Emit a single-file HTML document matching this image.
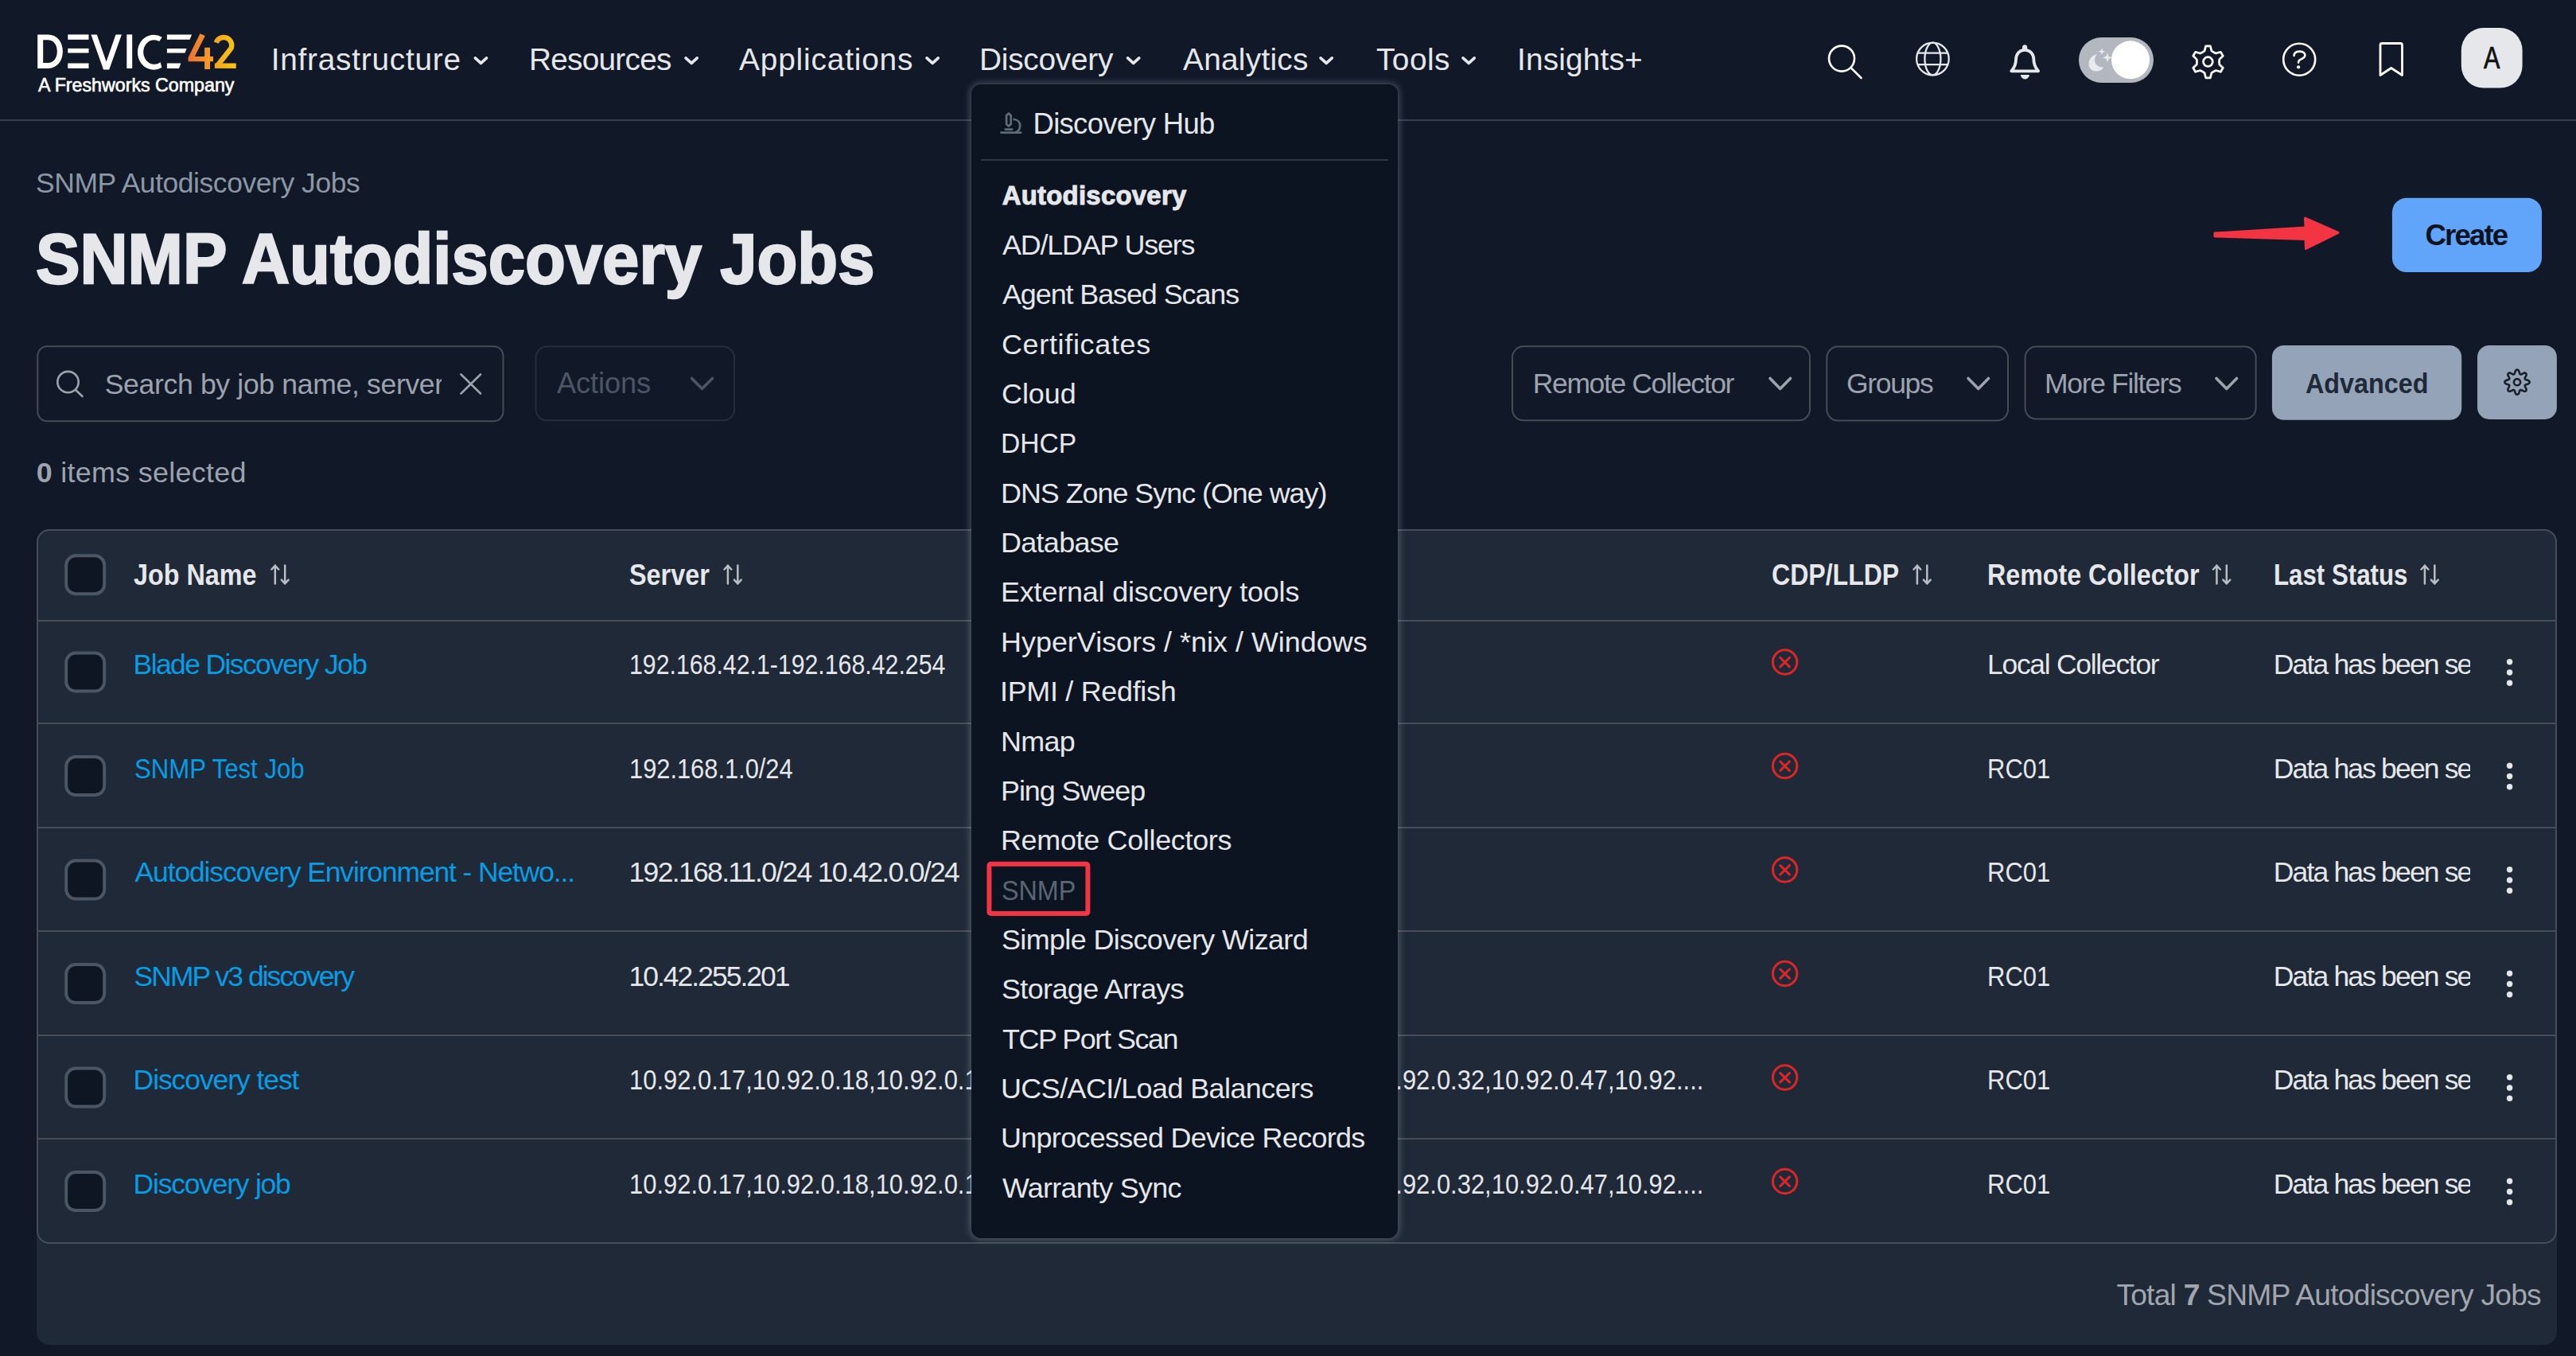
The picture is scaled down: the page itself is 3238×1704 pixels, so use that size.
<!DOCTYPE html>
<html><head><meta charset="utf-8">
<style>
*{margin:0;padding:0;box-sizing:border-box}
html,body{width:3238px;height:1704px;overflow:hidden;background:#111827;font-family:"Liberation Sans",sans-serif}
.t{position:absolute;white-space:nowrap;line-height:1}
.clip{position:absolute;overflow:hidden}
.a{position:absolute}
svg{position:absolute;overflow:visible}
</style></head><body>
<!-- NAV -->
<div class="a" style="left:0;top:150px;width:3238px;height:2px;background:#383e4b"></div>
<svg style="left:0;top:0" width="3238" height="150" viewBox="0 0 3238 150">
  <defs>
    <linearGradient id="lg" x1="236" y1="0" x2="297" y2="0" gradientUnits="userSpaceOnUse">
      <stop offset="0" stop-color="#ee6f2f"/><stop offset="0.5" stop-color="#f5a023"/><stop offset="1" stop-color="#f6c70f"/>
    </linearGradient>
  </defs>
  <!-- logo -->
  <path fill="#ffffff" fill-rule="evenodd" d="M47.2 43.4H60.5C71.5 43.4 78.9 52.2 78.9 64.6C78.9 77.1 71.5 85.9 60.5 85.9H47.2Z M54.2 50.2V79.1H60.2C67.2 79.1 71.8 73.4 71.8 64.6C71.8 55.9 67.2 50.2 60.2 50.2Z"/>
  <rect fill="#fff" x="85.3" y="43.4" width="26.2" height="6.4"/>
  <rect fill="#fff" x="85.3" y="60.9" width="26.2" height="5.6"/>
  <rect fill="#fff" x="85.3" y="79.5" width="26.2" height="6.4"/>
  <path fill="#fff" d="M114.4 43.4H121.8L133.6 77.5L145.5 43.4H152.9L137.2 87.6H130.1Z"/>
  <rect fill="#fff" x="159.3" y="43.4" width="6.9" height="42.5"/>
  <path fill="#fff" d="M203.7 46.8A20.3 22 0 1 0 203.4 84.7L201.6 78.3A13.8 15.3 0 1 1 200.3 51.9Z"/>
  <path fill="#fff" d="M209.9 43.4H241L238.6 49.8H209.9Z M209.9 60.9H234.6L232.5 66.5H209.9Z M209.9 79.5H227.4L225 85.9H209.9Z"/>
  <path fill="url(#lg)" d="M251.4 42.3L257.8 44.9L244.8 71H257.1V59.8H264V71H268V77.2H264V86.9H257.1V77.2H236.6V72.2Z"/>
  <path fill="none" stroke="url(#lg)" stroke-width="6.4" stroke-linejoin="round" d="M271.7 53.6A10 10 0 1 1 290.6 60.4L273.2 82.5"/>
  <rect fill="url(#lg)" x="269.9" y="79.5" width="26.8" height="6.4"/>
  <!-- nav chevrons -->
  <g fill="none" stroke="#e5e7eb" stroke-width="3.6" stroke-linecap="round" stroke-linejoin="round">
    <path d="M597.3 72.9L604.5 79.4L611.6 72.9"/>
    <path d="M862 72.9L869.2 79.4L876.3 72.9"/>
    <path d="M1165 72.9L1172.2 79.4L1179.3 72.9"/>
    <path d="M1417.5 72.9L1424.7 79.4L1431.8 72.9"/>
    <path d="M1660 72.9L1667.2 79.4L1674.3 72.9"/>
    <path d="M1839 72.9L1846.2 79.4L1853.3 72.9"/>
  </g>
  <!-- search -->
  <g fill="none" stroke="#ffffff" stroke-width="2.6" stroke-linecap="round">
    <circle cx="2315" cy="73.6" r="16"/>
    <path d="M2327 85.6L2339.5 98"/>
  </g>
  <!-- globe -->
  <g fill="none" stroke="#e5e7eb" stroke-width="2.3">
    <circle cx="2429.4" cy="74" r="20.3"/>
    <ellipse cx="2429.4" cy="74" rx="10" ry="20.3"/>
    <path d="M2410.5 66.7H2448.3M2410.5 81.2H2448.3"/>
  </g>
  <!-- bell -->
  <g fill="none" stroke="#e5e7eb" stroke-width="3.8" stroke-linejoin="round" stroke-linecap="round">
    <path d="M2545.2 62.8C2538.5 62.8 2534 68 2534 75C2534 81.5 2532 85 2528.3 89.3H2562.1C2558.4 85 2556.4 81.5 2556.4 75C2556.4 68 2551.9 62.8 2545.2 62.8Z"/>
  </g>
  <path fill="#e5e7eb" d="M2542 62V59.2C2542 57.4 2543.4 56.2 2545.2 56.2C2547 56.2 2548.2 57.4 2548.2 59.2V62Z"/>
  <path fill="#e5e7eb" d="M2539.8 94H2551C2550.5 97.3 2548 99.5 2545.4 99.5C2542.8 99.5 2540.3 97.3 2539.8 94Z"/>
  <!-- toggle -->
  <rect x="2613" y="47" width="94" height="57" rx="28.5" fill="#b3b8c0"/>
  <circle cx="2678" cy="75.3" r="24" fill="#ffffff"/>
  <path fill="#e8eaee" d="M2636 68C2629.5 69.5 2625.5 74.5 2625.5 80.5C2625.5 86.5 2630.5 89.5 2635 89.5C2639 89.5 2642.5 87.5 2644 84.5C2637 85 2632.5 80 2633 74.5C2633.2 72 2634.5 69.5 2636 68Z"/>
  <path fill="#e8eaee" d="M2642 60.5L2643.2 63.6L2646.3 64.8L2643.2 66L2642 69.1L2640.8 66L2637.7 64.8L2640.8 63.6Z"/>
  <path fill="#e8eaee" d="M2649 66.5L2650.6 70.8L2654.9 72.4L2650.6 74L2649 78.3L2647.4 74L2643.1 72.4L2647.4 70.8Z"/>
  <!-- gear -->
  <g fill="none" stroke="#ffffff" stroke-width="2.7" stroke-linejoin="round">
    <path d="M2771.11 63.88 L2772.62 57.81 L2778.38 57.81 L2779.89 63.88 L2782.50 65.68 L2785.36 67.04 L2791.37 65.31 L2794.26 70.30 L2789.75 74.64 L2789.50 77.80 L2789.75 80.96 L2794.26 85.30 L2791.37 90.29 L2785.36 88.56 L2782.50 89.92 L2779.89 91.72 L2778.38 97.79 L2772.62 97.79 L2771.11 91.72 L2768.50 89.92 L2765.64 88.56 L2759.63 90.29 L2756.74 85.30 L2761.25 80.96 L2761.50 77.80 L2761.25 74.64 L2756.74 70.30 L2759.63 65.31 L2765.64 67.04 L2768.50 65.68Z"/>
    <circle cx="2775.4" cy="77.6" r="5.9"/>
  </g>
  <!-- help -->
  <g fill="none" stroke="#ffffff" stroke-width="2.6" stroke-linecap="round">
    <circle cx="2890.2" cy="74.8" r="20"/>
    <path d="M2883.6 70C2883.6 66.6 2886.2 64.6 2890.6 64.6C2895 64.6 2897.4 66.8 2897.4 69.6C2897.4 72.4 2894.6 73.6 2891.6 74.9C2889.9 75.6 2889.1 76.6 2889.1 78.6"/>
  </g>
  <circle cx="2889.1" cy="84.3" r="2.1" fill="#ffffff"/>
  <!-- bookmark -->
  <path fill="none" stroke="#ffffff" stroke-width="2.8" stroke-linejoin="round" d="M2992 56.5C2992 55 2993 54.5 2994.5 54.5H3017C3018.5 54.5 3019.5 55 3019.5 56.5V94.5L3005.7 85.5L2992 94.5Z"/>
  <!-- avatar -->
  <rect x="3093.8" y="35.1" width="76.8" height="75.5" rx="28" fill="#e5e7eb"/>
</svg>

<!-- PAGE HEADER SHAPES -->
<svg style="left:0;top:0" width="3238" height="600" viewBox="0 0 3238 600">
  <path fill="#f33443" stroke="#f33443" stroke-width="3" stroke-linejoin="round" d="M2784 293L2898 286L2897.5 274L2939 292.3L2898.5 312.5L2898 300.5L2784 297Z"/>
  <rect x="3006.9" y="248.8" width="188.1" height="93.2" rx="18" fill="#60a5fa"/>
  <!-- search box -->
  <rect x="47.3" y="435.3" width="585.2" height="94" rx="12" fill="none" stroke="#454c58" stroke-width="2"/>
  <g fill="none" stroke="#9ca3af" stroke-width="2.6" stroke-linecap="round">
    <circle cx="85.5" cy="480.1" r="13.2"/>
    <path d="M95 490L103.5 498"/>
    <path d="M579.5 470.5L604 494.5M604 470.5L579.5 494.5"/>
  </g>
  <rect x="673.5" y="435.6" width="249.6" height="92.7" rx="14" fill="none" stroke="#272d3a" stroke-width="2"/>
  <path fill="none" stroke="#4b5563" stroke-width="3.6" stroke-linecap="round" stroke-linejoin="round" d="M869.5 475.5L882.5 488.5L895.5 475.5"/>
  <!-- filters -->
  <g fill="none" stroke="#454c58" stroke-width="2">
    <rect x="1901" y="435.3" width="374" height="93" rx="14"/>
    <rect x="2296.3" y="435.6" width="227.7" height="93" rx="14"/>
    <rect x="2545.6" y="435.6" width="290" height="91" rx="14"/>
  </g>
  <g fill="none" stroke="#9ca3af" stroke-width="3.6" stroke-linecap="round" stroke-linejoin="round">
    <path d="M2225 475.5L2237.7 488.5L2250.5 475.5"/>
    <path d="M2474 475.5L2486.8 488.5L2499.5 475.5"/>
    <path d="M2786 475.5L2798.8 488.5L2811.5 475.5"/>
  </g>
  <rect x="2855.9" y="433.9" width="238.3" height="93.9" rx="15" fill="#94a3b8"/>
  <rect x="3114" y="433.9" width="99.9" height="93" rx="15" fill="#94a3b8"/>
  <g fill="none" stroke="#1a1f29" stroke-width="2.6" stroke-linejoin="round">
    <path d="M3164.00 464.60 L3164.61 464.71 L3165.19 465.04 L3165.73 465.57 L3166.20 466.30 L3166.56 467.35 L3166.83 468.41 L3167.11 469.16 L3167.40 469.75 L3167.70 470.16 L3168.06 470.41 L3168.48 470.48 L3168.99 470.41 L3169.60 470.20 L3170.33 469.86 L3171.28 469.31 L3172.27 468.81 L3173.12 468.63 L3173.88 468.63 L3174.52 468.82 L3175.03 469.17 L3175.38 469.68 L3175.57 470.32 L3175.57 471.08 L3175.39 471.93 L3174.89 472.92 L3174.34 473.87 L3174.00 474.60 L3173.79 475.21 L3173.72 475.72 L3173.79 476.14 L3174.04 476.50 L3174.45 476.80 L3175.04 477.09 L3175.79 477.37 L3176.85 477.64 L3177.90 478.00 L3178.63 478.47 L3179.16 479.01 L3179.49 479.59 L3179.60 480.20 L3179.49 480.81 L3179.16 481.39 L3178.63 481.93 L3177.90 482.40 L3176.85 482.76 L3175.79 483.03 L3175.04 483.31 L3174.45 483.60 L3174.04 483.90 L3173.79 484.26 L3173.72 484.68 L3173.79 485.19 L3174.00 485.80 L3174.34 486.53 L3174.89 487.48 L3175.39 488.47 L3175.57 489.32 L3175.57 490.08 L3175.38 490.72 L3175.03 491.23 L3174.52 491.58 L3173.88 491.77 L3173.12 491.77 L3172.27 491.59 L3171.28 491.09 L3170.33 490.54 L3169.60 490.20 L3168.99 489.99 L3168.48 489.92 L3168.06 489.99 L3167.70 490.24 L3167.40 490.65 L3167.11 491.24 L3166.83 491.99 L3166.56 493.05 L3166.20 494.10 L3165.73 494.83 L3165.19 495.36 L3164.61 495.69 L3164.00 495.80 L3163.39 495.69 L3162.81 495.36 L3162.27 494.83 L3161.80 494.10 L3161.44 493.05 L3161.17 491.99 L3160.89 491.24 L3160.60 490.65 L3160.30 490.24 L3159.94 489.99 L3159.52 489.92 L3159.01 489.99 L3158.40 490.20 L3157.67 490.54 L3156.72 491.09 L3155.73 491.59 L3154.88 491.77 L3154.12 491.77 L3153.48 491.58 L3152.97 491.23 L3152.62 490.72 L3152.43 490.08 L3152.43 489.32 L3152.61 488.47 L3153.11 487.48 L3153.66 486.53 L3154.00 485.80 L3154.21 485.19 L3154.28 484.68 L3154.21 484.26 L3153.96 483.90 L3153.55 483.60 L3152.96 483.31 L3152.21 483.03 L3151.15 482.76 L3150.10 482.40 L3149.37 481.93 L3148.84 481.39 L3148.51 480.81 L3148.40 480.20 L3148.51 479.59 L3148.84 479.01 L3149.37 478.47 L3150.10 478.00 L3151.15 477.64 L3152.21 477.37 L3152.96 477.09 L3153.55 476.80 L3153.96 476.50 L3154.21 476.14 L3154.28 475.72 L3154.21 475.21 L3154.00 474.60 L3153.66 473.87 L3153.11 472.92 L3152.61 471.93 L3152.43 471.08 L3152.43 470.32 L3152.62 469.68 L3152.97 469.17 L3153.48 468.82 L3154.12 468.63 L3154.88 468.63 L3155.73 468.81 L3156.72 469.31 L3157.67 469.86 L3158.40 470.20 L3159.01 470.41 L3159.52 470.48 L3159.94 470.41 L3160.30 470.16 L3160.60 469.75 L3160.89 469.16 L3161.17 468.41 L3161.44 467.35 L3161.80 466.30 L3162.27 465.57 L3162.81 465.04 L3163.39 464.71Z"/>
    <circle cx="3164" cy="480.2" r="4.1"/>
  </g>
</svg>

<!-- TABLE PANEL -->
<div class="a" style="left:46px;top:665px;width:3168px;height:1025px;background:#1f2937;border-radius:16px"></div>
<div class="a" style="left:46px;top:665px;width:3168px;height:898px;border:2px solid #464c58;border-radius:16px"></div>
<div class="a" style="left:48px;top:779px;width:3164px;height:2px;background:#464c58"></div>
<div class="a" style="left:48px;top:908px;width:3164px;height:2px;background:#464c58"></div>
<div class="a" style="left:48px;top:1038.5px;width:3164px;height:2px;background:#464c58"></div>
<div class="a" style="left:48px;top:1169px;width:3164px;height:2px;background:#464c58"></div>
<div class="a" style="left:48px;top:1299.5px;width:3164px;height:2px;background:#464c58"></div>
<div class="a" style="left:48px;top:1430px;width:3164px;height:2px;background:#464c58"></div>
<svg style="left:0;top:0" width="3238" height="1704" viewBox="0 0 3238 1704">
  <defs>
    <g id="cb"><rect x="0" y="0" width="48" height="48" rx="12" fill="#0f1623" stroke="#4b5563" stroke-width="4"/></g>
    <g id="sort" fill="none" stroke="#b9bdc5" stroke-width="2.5" stroke-linecap="round" stroke-linejoin="round">
      <path d="M5.4 23.3V0.3M1 5.2L5.4 0.6L9.8 5.2"/>
      <path d="M17.8 0.3V23.3M13.4 18.4L17.8 23L22.2 18.4"/>
    </g>
    <g id="xc" fill="none" stroke="#dc2626" stroke-width="3.1" stroke-linecap="round">
      <circle cx="0" cy="0" r="15.2"/>
      <path d="M-5.8 -5.5L5.8 5.9M5.8 -5.5L-5.8 5.9"/>
    </g>
    <g id="keb" fill="#e5e7eb"><circle cx="0" cy="0" r="3.7"/><circle cx="0" cy="13.3" r="3.7"/><circle cx="0" cy="26.6" r="3.7"/></g>
  </defs>
  <use href="#cb" x="83.2" y="698.3"/>
  <use href="#sort" x="340.4" y="710.3"/>
  <use href="#sort" x="909.5" y="710.3"/>
  <use href="#sort" x="2404.5" y="710.3"/>
  <use href="#sort" x="2781" y="710.3"/>
  <use href="#sort" x="3042.5" y="710.3"/>
  <!--ROWS-->
  <use href="#cb" x="83.2" y="820.6"/>
  <use href="#cb" x="83.2" y="951.1"/>
  <use href="#cb" x="83.2" y="1081.6"/>
  <use href="#cb" x="83.2" y="1212.1"/>
  <use href="#cb" x="83.2" y="1342.6"/>
  <use href="#cb" x="83.2" y="1473.1"/>
  <use href="#xc" x="2243.6" y="832.0"/>
  <use href="#xc" x="2243.6" y="962.5"/>
  <use href="#xc" x="2243.6" y="1093.0"/>
  <use href="#xc" x="2243.6" y="1223.5"/>
  <use href="#xc" x="2243.6" y="1354.0"/>
  <use href="#xc" x="2243.6" y="1484.5"/>
  <use href="#keb" x="3154.6" y="831.7"/>
  <use href="#keb" x="3154.6" y="962.2"/>
  <use href="#keb" x="3154.6" y="1092.7"/>
  <use href="#keb" x="3154.6" y="1223.2"/>
  <use href="#keb" x="3154.6" y="1353.7"/>
  <use href="#keb" x="3154.6" y="1484.2"/>
</svg>

<div class="t" style="left:340.7px;top:55.8px;font-size:38.81px;font-weight:400;color:#e5e7eb;letter-spacing:0.76px;">Infrastructure</div>
<div class="t" style="left:665.0px;top:55.8px;font-size:38.81px;font-weight:400;color:#e5e7eb;letter-spacing:-0.76px;">Resources</div>
<div class="t" style="left:929.0px;top:55.8px;font-size:38.81px;font-weight:400;color:#e5e7eb;letter-spacing:0.84px;">Applications</div>
<div class="t" style="left:1231.0px;top:55.8px;font-size:38.81px;font-weight:400;color:#e5e7eb;letter-spacing:-0.24px;">Discovery</div>
<div class="t" style="left:1487.0px;top:55.8px;font-size:38.81px;font-weight:400;color:#e5e7eb;letter-spacing:0.27px;">Analytics</div>
<div class="t" style="left:1730.0px;top:55.8px;font-size:38.81px;font-weight:400;color:#e5e7eb;letter-spacing:0.46px;">Tools</div>
<div class="t" style="left:1907.0px;top:55.8px;font-size:38.81px;font-weight:400;color:#e5e7eb;letter-spacing:0.16px;">Insights+</div>
<div class="t" style="left:48.0px;top:96.1px;font-size:23.26px;font-weight:400;color:#ffffff;letter-spacing:-0.02px;-webkit-text-stroke:0.6px #ffffff;">A Freshworks Company</div>
<div class="t" style="left:3121.7px;top:53.0px;font-size:39.39px;font-weight:400;color:#111111;transform:scaleX(0.7778);transform-origin:0 0;-webkit-text-stroke:0.7px #111111;">A</div>
<div class="t" style="left:45.1px;top:212.5px;font-size:35.47px;font-weight:400;color:#8b97a4;letter-spacing:-0.44px;">SNMP Autodiscovery Jobs</div>
<div class="t" style="left:44.8px;top:281.3px;font-size:89.53px;font-weight:700;color:#e5e7eb;transform:scaleX(0.9297);transform-origin:0 0;-webkit-text-stroke:2.4px #e5e7eb;">SNMP Autodiscovery Jobs</div>
<div class="clip" style="left:132px;top:455.8px;width:423px;height:46px"><div class="t" style="left:131.7px;top:465.8px;font-size:35.61px;font-weight:400;color:#9ca3af;letter-spacing:-0.36px;;left:-0.3px;top:10px">Search by job name, server name</div></div>
<div class="t" style="left:700.0px;top:464.2px;font-size:36.34px;font-weight:400;color:#4b5563;letter-spacing:-0.16px;">Actions</div>
<div class="t" style="left:45.8px;top:576.8px;font-size:35.90px;font-weight:400;color:#9ca3af;letter-spacing:0.28px;"><b>0</b> items selected</div>
<div class="t" style="left:3048.5px;top:277.5px;font-size:36.63px;font-weight:700;color:#0b1220;letter-spacing:-1.88px;">Create</div>
<div class="t" style="left:1926.8px;top:465.1px;font-size:35.47px;font-weight:400;color:#9ca3af;letter-spacing:-1.36px;">Remote Collector</div>
<div class="t" style="left:2321.0px;top:465.1px;font-size:35.47px;font-weight:400;color:#9ca3af;letter-spacing:-1.31px;">Groups</div>
<div class="t" style="left:2570.0px;top:465.1px;font-size:35.47px;font-weight:400;color:#9ca3af;letter-spacing:-1.31px;">More Filters</div>
<div class="t" style="left:2898.0px;top:465.1px;font-size:35.47px;font-weight:700;color:#1f2937;transform:scaleX(0.9119);transform-origin:0 0;">Advanced</div>
<div class="t" style="left:168.4px;top:705.0px;font-size:36.63px;font-weight:700;color:#e5e7eb;transform:scaleX(0.8826);transform-origin:0 0;">Job Name</div>
<div class="t" style="left:791.1px;top:705.0px;font-size:36.63px;font-weight:700;color:#e5e7eb;transform:scaleX(0.8843);transform-origin:0 0;">Server</div>
<div class="t" style="left:2226.6px;top:705.0px;font-size:36.63px;font-weight:700;color:#e5e7eb;transform:scaleX(0.8749);transform-origin:0 0;">CDP/LLDP</div>
<div class="t" style="left:2497.5px;top:705.0px;font-size:36.63px;font-weight:700;color:#e5e7eb;transform:scaleX(0.8788);transform-origin:0 0;">Remote Collector</div>
<div class="t" style="left:2858.1px;top:705.0px;font-size:36.63px;font-weight:700;color:#e5e7eb;transform:scaleX(0.8532);transform-origin:0 0;">Last Status</div>
<div class="t" style="left:167.6px;top:818.1px;font-size:35.47px;font-weight:400;color:#049de6;letter-spacing:-1.61px;">Blade Discovery Job</div>
<div class="t" style="left:790.8px;top:818.1px;font-size:35.47px;font-weight:400;color:#e5e7eb;transform:scaleX(0.8536);transform-origin:0 0;">192.168.42.1-192.168.42.254</div>
<div class="t" style="left:2498.0px;top:818.1px;font-size:35.47px;font-weight:400;color:#e5e7eb;letter-spacing:-1.28px;">Local Collector</div>
<div class="clip" style="left:2855px;top:808.0px;width:249.5px;height:46px"><div class="t" style="left:2857.8px;top:818.0px;font-size:35.50px;font-weight:400;color:#e5e7eb;letter-spacing:-1.85px;;left:2.8px;top:10px">Data has been sent successfully</div></div>
<div class="t" style="left:168.7px;top:948.6px;font-size:35.47px;font-weight:400;color:#049de6;transform:scaleX(0.8788);transform-origin:0 0;">SNMP Test Job</div>
<div class="t" style="left:790.8px;top:948.6px;font-size:35.47px;font-weight:400;color:#e5e7eb;transform:scaleX(0.8689);transform-origin:0 0;">192.168.1.0/24</div>
<div class="t" style="left:2498.3px;top:948.6px;font-size:35.47px;font-weight:400;color:#e5e7eb;transform:scaleX(0.8743);transform-origin:0 0;">RC01</div>
<div class="clip" style="left:2855px;top:938.5px;width:249.5px;height:46px"><div class="t" style="left:2857.8px;top:948.5px;font-size:35.50px;font-weight:400;color:#e5e7eb;letter-spacing:-1.85px;;left:2.8px;top:10px">Data has been sent successfully</div></div>
<div class="t" style="left:169.6px;top:1079.1px;font-size:35.47px;font-weight:400;color:#049de6;letter-spacing:-1.14px;">Autodiscovery Environment - Netwo...</div>
<div class="t" style="left:790.5px;top:1079.1px;font-size:35.47px;font-weight:400;color:#e5e7eb;letter-spacing:-1.65px;">192.168.11.0/24 10.42.0.0/24</div>
<div class="t" style="left:2498.3px;top:1079.1px;font-size:35.47px;font-weight:400;color:#e5e7eb;transform:scaleX(0.8743);transform-origin:0 0;">RC01</div>
<div class="clip" style="left:2855px;top:1069.0px;width:249.5px;height:46px"><div class="t" style="left:2857.8px;top:1079.0px;font-size:35.50px;font-weight:400;color:#e5e7eb;letter-spacing:-1.85px;;left:2.8px;top:10px">Data has been sent successfully</div></div>
<div class="t" style="left:168.6px;top:1209.6px;font-size:35.47px;font-weight:400;color:#049de6;letter-spacing:-1.96px;">SNMP v3 discovery</div>
<div class="t" style="left:790.5px;top:1209.6px;font-size:35.47px;font-weight:400;color:#e5e7eb;letter-spacing:-1.98px;">10.42.255.201</div>
<div class="t" style="left:2498.3px;top:1209.6px;font-size:35.47px;font-weight:400;color:#e5e7eb;transform:scaleX(0.8743);transform-origin:0 0;">RC01</div>
<div class="clip" style="left:2855px;top:1199.5px;width:249.5px;height:46px"><div class="t" style="left:2857.8px;top:1209.5px;font-size:35.50px;font-weight:400;color:#e5e7eb;letter-spacing:-1.85px;;left:2.8px;top:10px">Data has been sent successfully</div></div>
<div class="t" style="left:167.6px;top:1340.1px;font-size:35.47px;font-weight:400;color:#049de6;letter-spacing:-1.07px;">Discovery test</div>
<div class="t" style="left:790.8px;top:1340.1px;font-size:35.47px;font-weight:400;color:#e5e7eb;transform:scaleX(0.8722);transform-origin:0 0;">10.92.0.17,10.92.0.18,10.92.0.19,10.92.0.20,10.92.0.21,10.92.0.22,10.92.0.32,10.92.0.47,10.92....</div>
<div class="t" style="left:2498.3px;top:1340.1px;font-size:35.47px;font-weight:400;color:#e5e7eb;transform:scaleX(0.8743);transform-origin:0 0;">RC01</div>
<div class="clip" style="left:2855px;top:1330.0px;width:249.5px;height:46px"><div class="t" style="left:2857.8px;top:1340.0px;font-size:35.50px;font-weight:400;color:#e5e7eb;letter-spacing:-1.85px;;left:2.8px;top:10px">Data has been sent successfully</div></div>
<div class="t" style="left:167.6px;top:1470.6px;font-size:35.47px;font-weight:400;color:#049de6;letter-spacing:-1.22px;">Discovery job</div>
<div class="t" style="left:790.8px;top:1470.6px;font-size:35.47px;font-weight:400;color:#e5e7eb;transform:scaleX(0.8722);transform-origin:0 0;">10.92.0.17,10.92.0.18,10.92.0.19,10.92.0.20,10.92.0.21,10.92.0.22,10.92.0.32,10.92.0.47,10.92....</div>
<div class="t" style="left:2498.3px;top:1470.6px;font-size:35.47px;font-weight:400;color:#e5e7eb;transform:scaleX(0.8743);transform-origin:0 0;">RC01</div>
<div class="clip" style="left:2855px;top:1460.5px;width:249.5px;height:46px"><div class="t" style="left:2857.8px;top:1470.5px;font-size:35.50px;font-weight:400;color:#e5e7eb;letter-spacing:-1.85px;;left:2.8px;top:10px">Data has been sent successfully</div></div>
<div class="t" style="left:2660.4px;top:1608.9px;font-size:37.21px;font-weight:400;color:#a1a6ae;letter-spacing:-0.78px;">Total <b>7</b> SNMP Autodiscovery Jobs</div>

<!-- MENU -->
<div class="a" style="left:1221px;top:106.3px;width:536px;height:1450px;background:#0c1422;border-radius:12px;box-shadow:0 0 9px 2px rgba(150,160,175,0.40)"></div>
<div class="a" style="left:1233px;top:200px;width:512px;height:2px;background:#2f3846"></div>
<svg style="left:0;top:0" width="3238" height="1704" viewBox="0 0 3238 1704">
  <g fill="none" stroke="#5f6b79" stroke-width="2.7" stroke-linecap="round" stroke-linejoin="round">
    <path d="M1265.1 145L1267.9 142.5L1270.7 145V156L1267.9 158.5L1265.1 156Z"/>
    <path d="M1263.8 162.6H1272.2M1258.5 166.6H1283.2"/>
    <path d="M1274.6 150C1279.5 150.3 1282.2 154 1282.2 158C1282.2 161.5 1280.5 164.3 1277.5 166"/>
  </g>
  <rect x="1243.4" y="1085.8" width="124" height="62.1" rx="2" fill="none" stroke="#f33443" stroke-width="6"/>
</svg>
<div class="t" style="left:1298.5px;top:137.7px;font-size:36.48px;font-weight:400;color:#e5e7eb;letter-spacing:-0.69px;">Discovery Hub</div>
<div class="t" style="left:1259.7px;top:229.5px;font-size:32.85px;font-weight:700;color:#e5e7eb;letter-spacing:0.29px;-webkit-text-stroke:1px #e5e7eb;">Autodiscovery</div>
<div class="t" style="left:1260.0px;top:290.9px;font-size:35.90px;font-weight:400;color:#e5e7eb;letter-spacing:-1.18px;">AD/LDAP Users</div>
<div class="t" style="left:1260.0px;top:353.3px;font-size:35.90px;font-weight:400;color:#e5e7eb;letter-spacing:-1.07px;">Agent Based Scans</div>
<div class="t" style="left:1259.0px;top:415.6px;font-size:35.90px;font-weight:400;color:#e5e7eb;letter-spacing:0.70px;">Certificates</div>
<div class="t" style="left:1259.0px;top:478.0px;font-size:35.90px;font-weight:400;color:#e5e7eb;letter-spacing:-0.03px;">Cloud</div>
<div class="t" style="left:1258.1px;top:540.3px;font-size:35.90px;font-weight:400;color:#e5e7eb;transform:scaleX(0.9356);transform-origin:0 0;">DHCP</div>
<div class="t" style="left:1258.0px;top:602.7px;font-size:35.90px;font-weight:400;color:#e5e7eb;letter-spacing:-1.02px;">DNS Zone Sync (One way)</div>
<div class="t" style="left:1258.0px;top:665.1px;font-size:35.90px;font-weight:400;color:#e5e7eb;letter-spacing:-0.67px;">Database</div>
<div class="t" style="left:1258.0px;top:727.4px;font-size:35.90px;font-weight:400;color:#e5e7eb;letter-spacing:-0.16px;">External discovery tools</div>
<div class="t" style="left:1258.0px;top:789.8px;font-size:35.90px;font-weight:400;color:#e5e7eb;letter-spacing:0.02px;">HyperVisors / *nix / Windows</div>
<div class="t" style="left:1257.0px;top:852.1px;font-size:35.90px;font-weight:400;color:#e5e7eb;letter-spacing:-0.29px;">IPMI / Redfish</div>
<div class="t" style="left:1258.0px;top:914.5px;font-size:35.90px;font-weight:400;color:#e5e7eb;letter-spacing:-0.69px;">Nmap</div>
<div class="t" style="left:1258.0px;top:976.9px;font-size:35.90px;font-weight:400;color:#e5e7eb;letter-spacing:-1.05px;">Ping Sweep</div>
<div class="t" style="left:1258.0px;top:1039.2px;font-size:35.90px;font-weight:400;color:#e5e7eb;letter-spacing:-0.30px;">Remote Collectors</div>
<div class="t" style="left:1259.1px;top:1101.6px;font-size:35.90px;font-weight:400;color:#5b6674;transform:scaleX(0.8992);transform-origin:0 0;">SNMP</div>
<div class="t" style="left:1259.0px;top:1163.9px;font-size:35.90px;font-weight:400;color:#e5e7eb;letter-spacing:-0.60px;">Simple Discovery Wizard</div>
<div class="t" style="left:1259.0px;top:1226.3px;font-size:35.90px;font-weight:400;color:#e5e7eb;letter-spacing:-0.60px;">Storage Arrays</div>
<div class="t" style="left:1260.0px;top:1288.7px;font-size:35.90px;font-weight:400;color:#e5e7eb;letter-spacing:-1.44px;">TCP Port Scan</div>
<div class="t" style="left:1258.0px;top:1351.0px;font-size:35.90px;font-weight:400;color:#e5e7eb;letter-spacing:-0.55px;">UCS/ACI/Load Balancers</div>
<div class="t" style="left:1258.0px;top:1413.4px;font-size:35.90px;font-weight:400;color:#e5e7eb;letter-spacing:-0.66px;">Unprocessed Device Records</div>
<div class="t" style="left:1260.0px;top:1475.7px;font-size:35.90px;font-weight:400;color:#e5e7eb;letter-spacing:-0.72px;">Warranty Sync</div>
</body></html>
